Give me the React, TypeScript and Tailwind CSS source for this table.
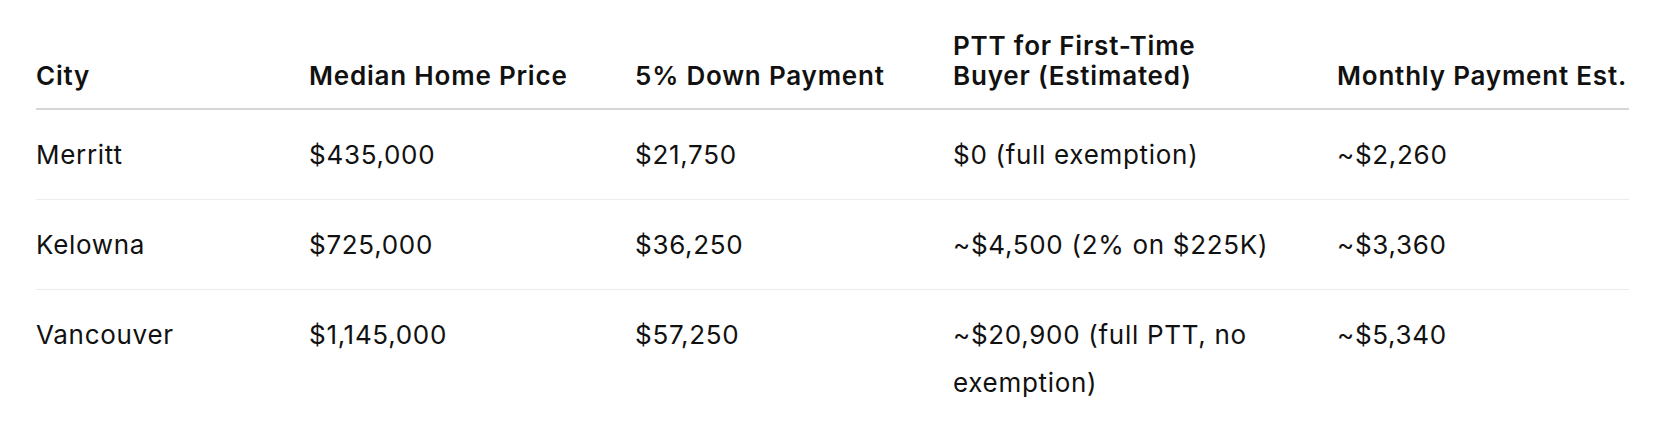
import React from "react";

const rows = [
  ["Merritt", "$435,000", "$21,750", "$0 (full exemption)", "~$2,260"],
  ["Kelowna", "$725,000", "$36,250", "~$4,500 (2% on $225K)", "~$3,360"],
  ["Vancouver", "$1,145,000", "$57,250", "~$20,900 (full PTT, no exemption)", "~$5,340"],
];

export default function App() {
  return (
    <div
      className="w-[1666px] h-[426px] bg-white pt-[31px] pl-[36px] text-[#111111] overflow-hidden"
      style={{ fontFamily: "Inter, 'Noto Sans', sans-serif" }}
    >
      <table className="table-fixed w-[1593px] border-separate border-spacing-0 text-[26px]">
        <colgroup>
          <col className="w-[273px]" />
          <col className="w-[326px]" />
          <col className="w-[318px]" />
          <col className="w-[384px]" />
          <col className="w-[292px]" />
        </colgroup>
        <thead>
          <tr>
            <th className="text-left align-bottom font-semibold tracking-[0.8px] leading-[30px] pb-[17px] border-b-2 border-[#d6d6d6]">City</th>
            <th className="text-left align-bottom font-semibold tracking-[0.8px] leading-[30px] pb-[17px] whitespace-nowrap border-b-2 border-[#d6d6d6]">Median Home Price</th>
            <th className="text-left align-bottom font-semibold tracking-[0.8px] leading-[30px] pb-[17px] whitespace-nowrap border-b-2 border-[#d6d6d6]">5% Down Payment</th>
            <th className="text-left align-bottom font-semibold tracking-[0.8px] leading-[30px] pb-[17px] pr-[90px] border-b-2 border-[#d6d6d6]">PTT for First-Time Buyer (Estimated)</th>
            <th className="text-left align-bottom font-semibold tracking-[0.8px] leading-[30px] pb-[17px] whitespace-nowrap border-b-2 border-[#d6d6d6]">Monthly Payment Est.</th>
          </tr>
        </thead>
        <tbody>
          {rows.map((r, i) => (
            <tr key={i}>
              {r.map((c, j) => (
                <td
                  key={j}
                  className={
                    "align-top font-normal tracking-[0.7px] leading-[48px] pt-[21px] pb-[20px] " +
                    (j === 3 ? "pr-[40px] " : "") +
                    (i < rows.length - 1 ? "border-b border-[#ececec]" : "")
                  }
                >
                  {c}
                </td>
              ))}
            </tr>
          ))}
        </tbody>
      </table>
    </div>
  );
}
